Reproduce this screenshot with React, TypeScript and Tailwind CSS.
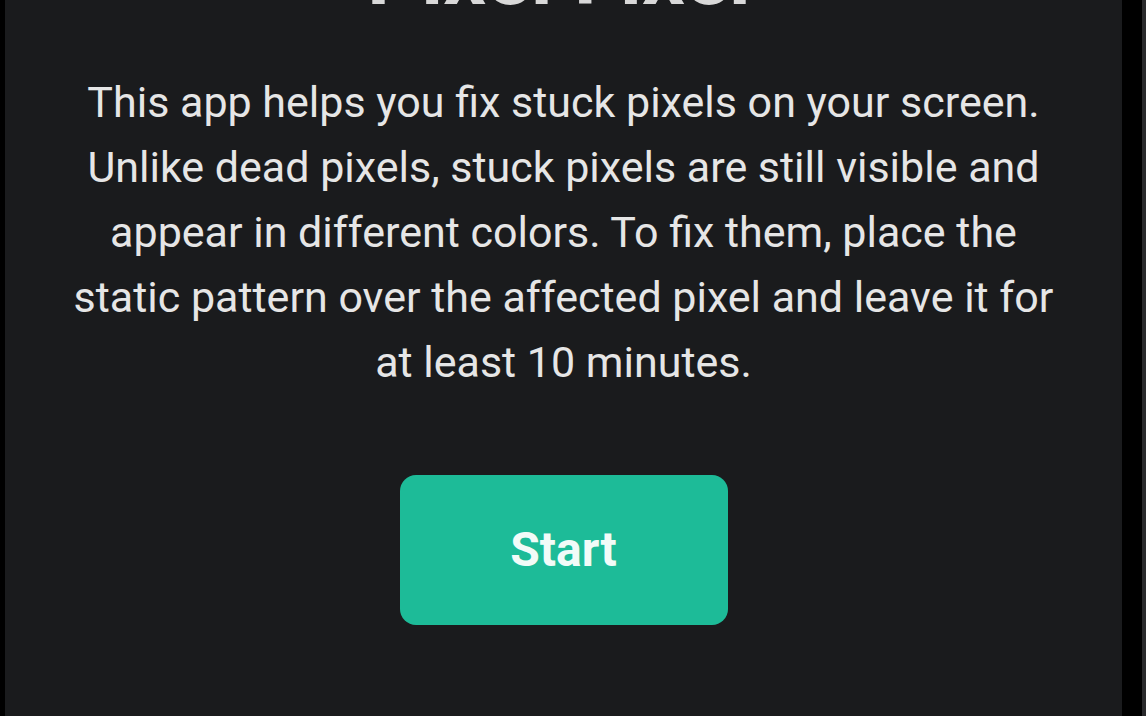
export default function App() {
  return (
    <div
      className="flex h-[716px] w-[1146px] overflow-hidden bg-black"
      style={{ fontFamily: "Roboto, 'Noto Sans', sans-serif" }}
    >
      <div className="w-[5px] bg-black" />
      <main className="flex flex-1 flex-col items-center overflow-hidden bg-[#1a1b1d]">
        <h1 className="mt-[-66px] text-[84px] font-bold leading-[84px] text-[#d8d8d8]">
          Pixel Fixer
        </h1>
        <p className="mt-[52px] text-center text-[43px] leading-[65px] text-[#e6e6e6]">
          This app helps you fix stuck pixels on your screen.
          <br />
          Unlike dead pixels, stuck pixels are still visible and
          <br />
          appear in different colors. To fix them, place the
          <br />
          static pattern over the affected pixel and leave it for
          <br />
          at least 10 minutes.
        </p>
        <button className="mt-[80px] h-[150px] w-[328px] rounded-[16px] bg-[#1dbb98] text-[48px] font-bold text-[#f2fbf8]">
          Start
        </button>
      </main>
      <div className="w-[20px] bg-black" />
      <div className="w-[4px] bg-[#2a2a2c]" />
    </div>
  );
}
